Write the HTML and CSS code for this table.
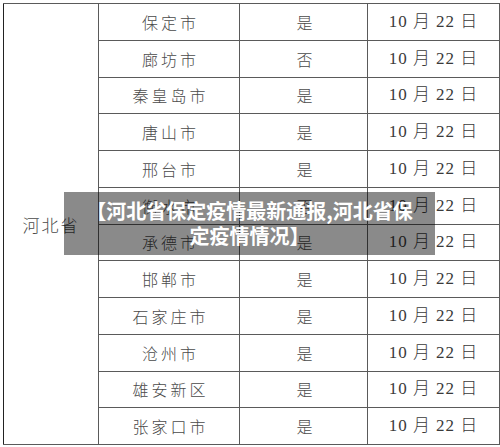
FILE: index.html
```html
<!DOCTYPE html>
<html lang="zh-CN">
<head>
<meta charset="utf-8">
<title>河北省保定疫情最新通报</title>
<link rel="stylesheet" href="styles.css">
</head>
<body>
<div class="page">
  <table class="grid">
    <colgroup>
      <col class="c-prov"><col class="c-city"><col class="c-flag"><col class="c-date">
    </colgroup>
    <tbody>
      <tr><td class="prov" rowspan="12">河北省</td><td class="city">保定市</td><td class="flag">是</td><td class="date">10 月 22 日</td></tr>
      <tr><td class="city">廊坊市</td><td class="flag">否</td><td class="date">10 月 22 日</td></tr>
      <tr><td class="city">秦皇岛市</td><td class="flag">是</td><td class="date">10 月 22 日</td></tr>
      <tr><td class="city">唐山市</td><td class="flag">是</td><td class="date">10 月 22 日</td></tr>
      <tr><td class="city">邢台市</td><td class="flag">是</td><td class="date">10 月 22 日</td></tr>
      <tr><td class="city">衡水市</td><td class="flag">否</td><td class="date">10 月 22 日</td></tr>
      <tr><td class="city">承德市</td><td class="flag">是</td><td class="date">10 月 22 日</td></tr>
      <tr><td class="city">邯郸市</td><td class="flag">是</td><td class="date">10 月 22 日</td></tr>
      <tr><td class="city">石家庄市</td><td class="flag">是</td><td class="date">10 月 22 日</td></tr>
      <tr><td class="city">沧州市</td><td class="flag">是</td><td class="date">10 月 22 日</td></tr>
      <tr><td class="city">雄安新区</td><td class="flag">是</td><td class="date">10 月 22 日</td></tr>
      <tr><td class="city">张家口市</td><td class="flag">是</td><td class="date">10 月 22 日</td></tr>
    </tbody>
  </table>
  <div class="caption">【河北省保定疫情最新通报,河北省保定疫情情况】</div>
</div>
</body>
</html>
```
FILE: styles.css
```css
html, body {
  margin: 0;
  padding: 0;
  background: #ffffff;
}
.page {
  position: relative;
  width: 500px;
  height: 447px;
  padding: 3px 0 0 3px;
  box-sizing: border-box;
  overflow: hidden;
}
.grid {
  width: 496px;
  border-collapse: collapse;
  table-layout: fixed;
  border: 1.5px solid #222;
  font-family: "Noto Sans CJK SC", sans-serif;
  font-weight: 300;
  color: #4a4a4a;
}
.c-prov { width: 95px; }
.c-city { width: 141px; }
.c-flag { width: 128px; }
.c-date { width: 132px; }
.grid td {
  height: 36.75px;
  padding: 0;
  box-sizing: border-box;
  border: 1.5px solid #5a5a5a;
  text-align: center;
  vertical-align: middle;
  font-size: 16px;
  line-height: 20px;
}
.grid td.prov {
  font-size: 17px;
  letter-spacing: 2px;
  border-left-color: #222;
  padding-top: 2px;
}
.grid td.city {
  letter-spacing: 3px;
  padding-left: 3px;
}
.grid td.flag {
  padding-left: 2px;
}
.grid td.date {
  font-family: "Liberation Serif", "Noto Sans CJK SC", serif;
  font-size: 17px;
  letter-spacing: 1px;
  color: #3a3a3a;
}
.caption {
  position: absolute;
  left: 64px;
  top: 192px;
  width: 371px;
  height: 63px;
  box-sizing: border-box;
  padding: 6px 18px 0 18px;
  background: rgba(0, 0, 0, 0.46);
  color: #ffffff;
  font-family: "Noto Sans CJK SC", sans-serif;
  font-weight: 700;
  font-size: 20px;
  line-height: 25px;
  text-align: center;
  letter-spacing: 0;
}
```
